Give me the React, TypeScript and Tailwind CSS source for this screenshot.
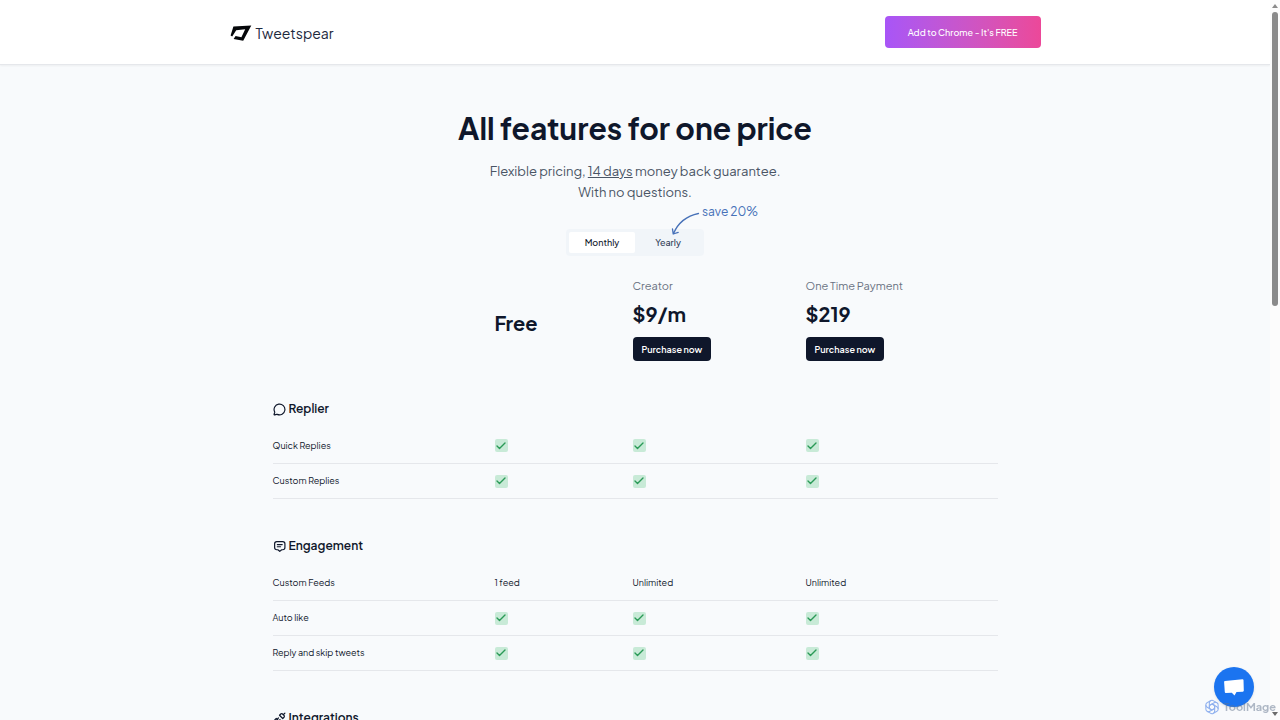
import { useState } from "react";
import { Check, MessageCircle, Unplug } from "lucide-react";

const sections = [
  {
    title: "Replier",
    icon: <MessageCircle size={13} strokeWidth={2.2} />,
    rows: [
      { name: "Quick Replies", values: [true, true, true] },
      { name: "Custom Replies", values: [true, true, true] },
    ],
  },
  {
    title: "Engagement",
    icon: (
      <svg width="13" height="13" viewBox="0 0 24 24" fill="none" stroke="currentColor" strokeWidth="2.2" strokeLinecap="round" strokeLinejoin="round">
        <path d="M7 3h11a4 4 0 0 1 4 4v7a4 4 0 0 1-4 4h-2l-3.500 3L9 18H7a4 4 0 0 1-4-4V7a4 4 0 0 1 4-4z" />
        <path d="M8 8.500h9M8 12.500h6" />
      </svg>
    ),
    rows: [
      { name: "Custom Feeds", values: ["1 feed", "Unlimited", "Unlimited"] },
      { name: "Auto like", values: [true, true, true] },
      { name: "Reply and skip tweets", values: [true, true, true] },
    ],
  },
  {
    title: "Integrations",
    icon: <Unplug size={13} strokeWidth={2.2} />,
    rows: [],
  },
];

const plans = [
  { name: "Creator", price: "$9/m" },
  { name: "One Time Payment", price: "$219" },
];

function Header() {
  return (
    <header className="border-b border-gray-200 bg-white px-4 shadow-xs">
      <div className="mx-auto flex h-16 max-w-[811px] items-center justify-between">
        <a href="#" className="flex items-center gap-1 pt-[2px] text-sm text-slate-800">
          <svg width="22" height="16" viewBox="0 0 22 16" fill="#05070a">
            <path d="M3.400 1.400 21.300.4 13.200 15.700 3.600 14l2-3.100 5.800 1.300L15.200 4.200 6.200 5.200 2.200 11.600.6 10.600z" />
          </svg>
          Tweetspear
        </a>
        <a
          href="#"
          className="flex h-8 items-center rounded bg-linear-to-r from-[#a855f7] to-[#ec4899] px-[23px] pt-px text-[9px] font-medium text-white"
        >
          Add to Chrome - It's FREE
        </a>
      </div>
    </header>
  );
}

function BillingToggle() {
  const [period, setPeriod] = useState("Monthly");

  return (
    <div className="relative mx-auto mt-[26px] flex w-[138px] rounded bg-slate-100 p-[3px]">
      {["Monthly", "Yearly"].map((p) => (
        <button
          key={p}
          type="button"
          onClick={() => setPeriod(p)}
          className={`h-[21px] flex-1 rounded-xs pt-px text-[9px] font-medium ${
            period === p ? "bg-white text-slate-900" : "text-slate-700"
          }`}
        >
          {p}
        </button>
      ))}
      <div className="absolute -top-[27px] left-[105px] flex items-start gap-[2px] text-[#4771b8]">
        <svg width="29" height="34" viewBox="0 0 29 34" fill="none" stroke="currentColor" strokeWidth="1.3" strokeLinecap="round" strokeLinejoin="round">
          <path d="M27.500 11.500C15.500 14 7 21 2.500 31.500M1.500 27l.7 5 5-1.600" />
        </svg>
        <span className="text-[12px] leading-5 whitespace-nowrap">save 20%</span>
      </div>
    </div>
  );
}

function Cell({ value }: { value: string | boolean }) {
  if (typeof value === "string") return <>{value}</>;
  return (
    <span className="flex size-[13px] items-center justify-center rounded-xs bg-[#c8ead7] text-[#2a9a57]">
      <Check size={12} strokeWidth={2.8} aria-label="Included" />
    </span>
  );
}

function PricingTable() {
  return (
    <table className="mx-auto mt-5 w-full max-w-[725px] table-fixed text-left text-slate-900">
      <colgroup>
        <col className="w-[222px]" />
        <col className="w-[138px]" />
        <col className="w-[173px]" />
        <col />
      </colgroup>
      <thead>
        <tr>
          <td />
          <th scope="col" className="pt-2 text-xl font-bold">Free</th>
          {plans.map((plan) => (
            <th key={plan.name} scope="col" className="font-normal">
              <p className="text-[11px] leading-5 text-gray-500">{plan.name}</p>
              <p className="mt-1 text-xl leading-7 font-bold">{plan.price}</p>
              <button type="button" className="mt-[9px] block h-6 rounded bg-slate-900 px-[9px] pt-px text-[9px] font-semibold text-white">
                Purchase now
              </button>
            </th>
          ))}
        </tr>
      </thead>
      {sections.map((section) => (
        <tbody key={section.title}>
          <tr className="h-[67px]">
            <th colSpan={4} scope="colgroup" className="pb-[9px] align-bottom text-[12px] leading-5 font-semibold">
              <span className="flex items-center gap-[3px]">
                {section.icon}
                {section.title}
              </span>
            </th>
          </tr>
          {section.rows.map((row) => (
            <tr key={row.name} className="h-[35px] border-b border-gray-200 text-[9px]">
              <th scope="row" className="pt-px font-normal text-slate-900">{row.name}</th>
              {row.values.map((value, i) => (
                <td key={i} className="pt-px">
                  <Cell value={value} />
                </td>
              ))}
            </tr>
          ))}
        </tbody>
      ))}
    </table>
  );
}

function Scrollbar() {
  return (
    <div className="flex w-[10px] flex-col items-center justify-between bg-[#fcfcfc] py-1">
      <div className="flex flex-col items-center gap-1">
        <svg width="6" height="4" viewBox="0 0 6 4" fill="#8b8b8b"><path d="M3 0 6 4H0z" /></svg>
        <div className="h-[294px] w-[6px] rounded-full bg-[#8b8b8b]" />
      </div>
      <svg width="6" height="4" viewBox="0 0 6 4" fill="#6b6b6b"><path d="M0 0h6L3 4z" /></svg>
    </div>
  );
}

export default function App() {
  return (
    <div className="flex h-screen overflow-hidden bg-slate-50 font-['Plus_Jakarta_Sans',Inter,sans-serif]">
      <div className="min-w-0 flex-1 overflow-hidden">
        <Header />
        <main className="px-4 pt-[43px]">
          <h1 className="text-center text-[30px] leading-10 font-bold text-slate-900">
            All features for one price
          </h1>
          <p className="mt-[13px] text-center text-[13px] leading-[21px] text-gray-600">
            Flexible pricing, <span className="underline">14 days</span> money back guarantee.
            <br />
            With no questions.
          </p>
          <BillingToggle />
          <PricingTable />
        </main>
      </div>
      <Scrollbar />
      <button
        type="button"
        aria-label="Open chat"
        className="fixed right-[26px] bottom-[13px] flex size-10 items-center justify-center rounded-full bg-[#1b74f0] shadow"
      >
        <svg width="20" height="18" viewBox="0 0 20 18" fill="#fff">
          <path d="M1 3 18.500 1.200a1 1 0 0 1 1 .8l.3 10.600a1 1 0 0 1-1 1.100l-6.300.4-2 3.500-2.700-2.800-6 .2a1 1 0 0 1-1-1L.1 4a1 1 0 0 1 .9-1z" />
        </svg>
      </button>
      <div className="pointer-events-none fixed right-1 bottom-[5px] flex items-center gap-1 text-[11px] leading-4 font-bold text-slate-500/50">
        <svg width="16" height="16" viewBox="0 0 24 24" fill="none" stroke="#8fb0ee" strokeWidth="1.6">
          {[0, 60, 120, 180, 240, 300].map((angle) => (
            <path key={angle} d="M8 14V6a4 4 0 0 1 6.500-3.200L19 5.500M12 7.500l4 2.300" transform={`rotate(${angle} 12 12)`} />
          ))}
        </svg>
        ToolMage
      </div>
    </div>
  );
}
